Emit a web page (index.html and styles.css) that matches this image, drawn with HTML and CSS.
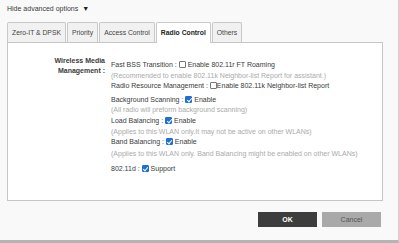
FILE: index.html
```html
<!DOCTYPE html>
<html lang="en">
<head>
  <meta charset="UTF-8" />
  <meta name="viewport" content="width=device-width, initial-scale=1.0"/>
  <title>WLAN Advanced Options</title>
  <link rel="stylesheet" href="styles.css">
</head>
<body>
  <div class="dialog">
    <div class="toggle">Hide advanced options <span class="arrow">&#9660;</span></div>

    <div class="tabs">
      <div class="tab">Zero-IT &amp; DPSK</div>
      <div class="tab">Priority</div>
      <div class="tab">Access Control</div>
      <div class="tab active">Radio Control</div>
      <div class="tab">Others</div>
    </div>

    <div class="panel">
      <div class="form">
        <div class="label">Wireless Media<br>Management :</div>
        <div class="fields">
          <div class="row">Fast BSS Transition : <span class="box"></span> Enable 802.11r FT Roaming</div>
          <div class="hint">(Recommended to enable 802.11k Neighbor-list Report for assistant.)</div>
          <div class="row">Radio Resource Management : <span class="box"></span>Enable 802.11k Neighbor-list Report</div>

          <div class="row gap">Background Scanning : <span class="box on"></span> Enable</div>
          <div class="hint">(All radio will preform background scanning)</div>
          <div class="row">Load Balancing : <span class="box on"></span> Enable</div>
          <div class="hint">(Applies to this WLAN only.It may not be active on other WLANs)</div>
          <div class="row">Band Balancing : <span class="box on"></span> Enable</div>
          <div class="hint gap">(Applies to this WLAN only. Band Balancing might be enabled on other WLANs)</div>
          <div class="row last">802.11d : <span class="box on"></span> Support</div>
        </div>
      </div>
    </div>

    <div class="actions">
      <button class="btn ok">OK</button>
      <button class="btn cancel">Cancel</button>
    </div>
  </div>
</body>
</html>
```

FILE: styles.css
```css
* { box-sizing: border-box; }
body {
  margin: 0;
  background: #ffffff;
  font-family: "Liberation Sans", Arial, sans-serif;
  font-size: 7px;
  color: #3a3a3a;
}

.dialog {
  width: 399px;
  height: 243px;
  background: #f9f9f9;
  border-right: 1px solid #cfcfcf;
  border-bottom: 3px solid #b4b4b4;
  padding-top: 4px;
}

.toggle {
  padding-left: 7px;
  height: 18px;
  line-height: 9px;
}
.toggle .arrow { font-size: 7px; color: #222; margin-left: 2px; }

.tabs {
  display: flex;
  padding-left: 7px;
  height: 20px;
  position: relative;
  z-index: 1;
}
.tab {
  border: 1px solid #c9c9c9;
  border-bottom: none;
  border-radius: 2px 2px 0 0;
  background: #f1f1f1;
  padding: 0 4px;
  font-size: 6.8px;
  line-height: 19px;
  margin-right: 1px;
  color: #444;
}
.tab.active {
  background: #fff;
  font-weight: bold;
  color: #222;
  height: 21px;
}

.panel {
  margin: 0 15px 0 7px;
  height: 159px;
  background: #fff;
  border: 1px solid #c6c6c6;
  padding-top: 17px;
}

.form {
  display: grid;
  grid-template-columns: 97px 1fr;
  column-gap: 6px;
}
.label {
  text-align: right;
  font-weight: bold;
  line-height: 10px;
  margin-top: -4px;
}
.fields { line-height: 10.6px; }
.hint { color: #aaa; }
.gap { margin-top: 3px; }
.hint.gap { margin-top: 1px; margin-bottom: 4px; }
.last { margin-top: 5px; }

.box {
  display: inline-block;
  width: 7px;
  height: 7px;
  border: 1px solid #777;
  border-radius: 1px;
  vertical-align: -1px;
  background: #fff;
  position: relative;
}
.box.on {
  background: #1c6fd8;
  border-color: #1c6fd8;
}
.box.on::after {
  content: "";
  position: absolute;
  left: 1.5px;
  top: 0;
  width: 2px;
  height: 4px;
  border: solid #fff;
  border-width: 0 1px 1px 0;
  transform: rotate(40deg);
}

.actions {
  display: flex;
  justify-content: flex-end;
  gap: 5px;
  padding-right: 17px;
  margin-top: 11px;
}
.btn {
  width: 59px;
  height: 15px;
  border: none;
  font-family: "Liberation Sans", Arial, sans-serif;
  font-size: 7px;
  padding: 0;
}
.ok { background: #3d3d3d; color: #fff; font-weight: bold; }
.cancel { background: #a9a9a9; color: #555; }
```
